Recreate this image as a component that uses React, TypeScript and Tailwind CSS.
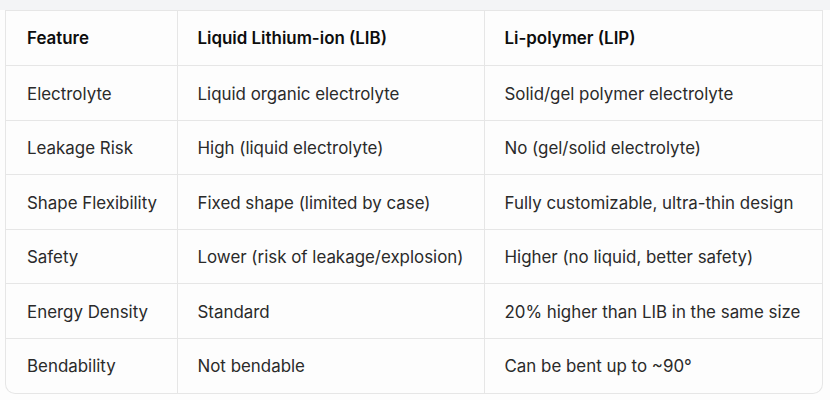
const rows: [string, string, string][] = [
  ['Electrolyte', 'Liquid organic electrolyte', 'Solid/gel polymer electrolyte'],
  ['Leakage Risk', 'High (liquid electrolyte)', 'No (gel/solid electrolyte)'],
  ['Shape Flexibility', 'Fixed shape (limited by case)', 'Fully customizable, ultra-thin design'],
  ['Safety', 'Lower (risk of leakage/explosion)', 'Higher (no liquid, better safety)'],
  ['Energy Density', 'Standard', '20% higher than LIB in the same size'],
  ['Bendability', 'Not bendable', 'Can be bent up to ~90°'],
];

export default function App() {
  return (
    <div className="w-[830px] h-[400px] bg-[#fdfdfd] font-['Inter',sans-serif] text-[16.9px] text-[#2a2a2a]">
      {/* top strip */}
      <div className="h-[10px] bg-[#f3f4f6]" />

      <div className="ml-[5px] w-[818px] border border-t-0 border-[#e6e6e6] rounded-b-[10px] overflow-hidden bg-[#fdfdfd]">
        <table className="w-full border-collapse table-fixed">
          <colgroup>
            <col className="w-[171px]" />
            <col className="w-[307px]" />
            <col />
          </colgroup>
          <thead>
            <tr className="h-[55px] border-t border-[#e6e6e6]">
              <th className="text-left font-semibold text-[#0d0d0d] pl-[21px] pt-[2px]">Feature</th>
              <th className="text-left font-semibold text-[#0d0d0d] pl-[20px] pt-[2px] border-l border-[#e6e6e6]">Liquid Lithium-ion (LIB)</th>
              <th className="text-left font-semibold text-[#0d0d0d] pl-[20px] pt-[2px] border-l border-[#e6e6e6]">Li-polymer (LIP)</th>
            </tr>
          </thead>
          <tbody>
            {rows.map((r) => (
              <tr key={r[0]} className="h-[54.5px] border-t border-[#e6e6e6]">
                <td className="pl-[21px] pt-[3px]">{r[0]}</td>
                <td className="pl-[20px] pt-[3px] border-l border-[#e6e6e6]">{r[1]}</td>
                <td className="pl-[20px] pt-[3px] border-l border-[#e6e6e6]">{r[2]}</td>
              </tr>
            ))}
          </tbody>
        </table>
      </div>
    </div>
  );
}
